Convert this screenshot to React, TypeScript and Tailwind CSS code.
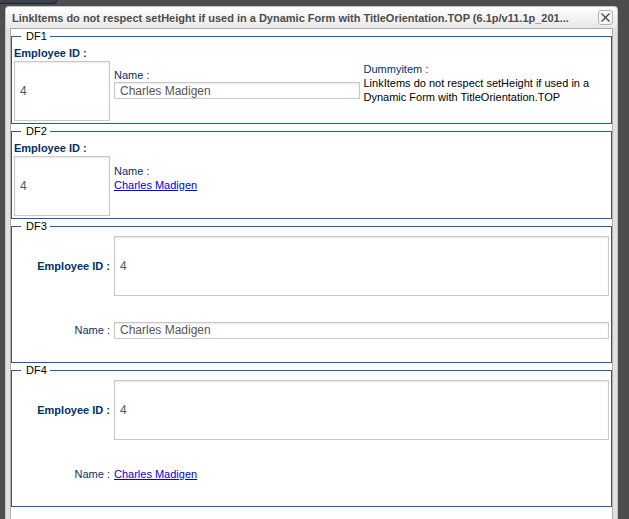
import { useId, type ReactNode } from "react";

function Section({ title, children }: { title: string; children: ReactNode }) {
  return (
    <fieldset className="min-w-0 border border-[#1a5fa5]">
      <legend className="ml-[9px] pr-[3px] pl-[5px] leading-[15px] text-black">{title}</legend>
      {children}
    </fieldset>
  );
}

const box =
  "block w-full border border-[#c8c8c8] bg-white px-[5px] text-[12px] text-[#555] shadow-[inset_0_1px_2px_#e8e8e8] outline-none";

function StackedId() {
  const id = useId();
  return (
    <div className="px-[2px] pb-[2px]">
      <label htmlFor={id} className="block pt-[2px] leading-[15px] font-bold whitespace-nowrap">
        Employee ID :
      </label>
      <input id={id} defaultValue="4" className={`${box} h-[60px]`} />
    </div>
  );
}

function StackedName() {
  const id = useId();
  return (
    <div className="px-[2px]">
      <label htmlFor={id} className="block leading-[14px]">
        Name :
      </label>
      <input id={id} defaultValue="Charles Madigen" className={`${box} h-[17px]`} />
    </div>
  );
}

function EmployeeLink() {
  return (
    <a href="#employee" className="text-[#0000ee] underline">
      Charles Madigen
    </a>
  );
}

function SideId() {
  const id = useId();
  return (
    <>
      <label htmlFor={id} className="text-right font-bold">
        Employee ID :
      </label>
      <input id={id} defaultValue="4" className={`${box} h-[60px]`} />
    </>
  );
}

function SideName() {
  const id = useId();
  return (
    <>
      <label htmlFor={id} className="text-right">
        Name :
      </label>
      <input id={id} defaultValue="Charles Madigen" className={`${box} h-[17px]`} />
    </>
  );
}

const topGrid = "grid grid-cols-[100px_1fr_1fr] items-center";
const sideGrid = "grid auto-rows-[64px] grid-cols-[98px_1fr] items-center gap-x-1 pr-[2px]";

export default function App() {
  return (
    <div className="flex min-h-screen flex-col bg-[#4d4d4d] font-['Liberation_Sans',Arial,sans-serif] text-[11px] leading-[14px] text-[#003168]">
      <div className="mb-[2px] h-1 w-[57px] rounded-br-sm border-r border-b border-[#20242b] bg-[#3b424b]" />
      <section className="mr-[11px] ml-[5px] flex grow flex-col rounded-t-[4px] border border-b-0 border-[#c4c4c4] bg-[#e2e0e0]">
        <header className="flex h-[21px] items-center justify-between rounded-t-[4px] bg-linear-to-b from-white to-[#e8e8e8] pr-1 pl-[6px]">
          <h1 className="truncate text-[11px] font-bold text-[#4d4d4d]">
            LinkItems do not respect setHeight if used in a Dynamic Form with TitleOrientation.TOP (6.1p/v11.1p_201...
          </h1>
          <button
            type="button"
            aria-label="Close"
            className="ml-1 flex h-[15px] w-[15px] shrink-0 items-center justify-center rounded-[3px] border border-[#b5b5b5] bg-[#f6f6f6]"
          >
            <svg width="9" height="9" viewBox="0 0 9 9" stroke="#444" strokeWidth="1.3" aria-hidden="true">
              <path d="M.5 .5 8.500 8.500M8.500 .5 .5 8.500" />
            </svg>
          </button>
        </header>
        <main className="mr-1 ml-1 grow border border-b-0 border-[#adadad] bg-white">
          <Section title="DF1">
            <div className={topGrid}>
              <StackedId />
              <StackedName />
              <div className="px-[2px] pb-[2px]">
                <p>Dummyitem :</p>
                <p className="text-black">
                  LinkItems do not respect setHeight if used in a Dynamic Form with TitleOrientation.TOP
                </p>
              </div>
            </div>
          </Section>
          <Section title="DF2">
            <div className={topGrid}>
              <StackedId />
              <div className="px-[2px] pb-[2px]">
                <p>Name :</p>
                <EmployeeLink />
              </div>
            </div>
          </Section>
          <Section title="DF3">
            <div className={sideGrid}>
              <SideId />
              <SideName />
            </div>
          </Section>
          <Section title="DF4">
            <div className={sideGrid}>
              <SideId />
              <span className="text-right">Name :</span>
              <span>
                <EmployeeLink />
              </span>
            </div>
          </Section>
        </main>
      </section>
    </div>
  );
}
